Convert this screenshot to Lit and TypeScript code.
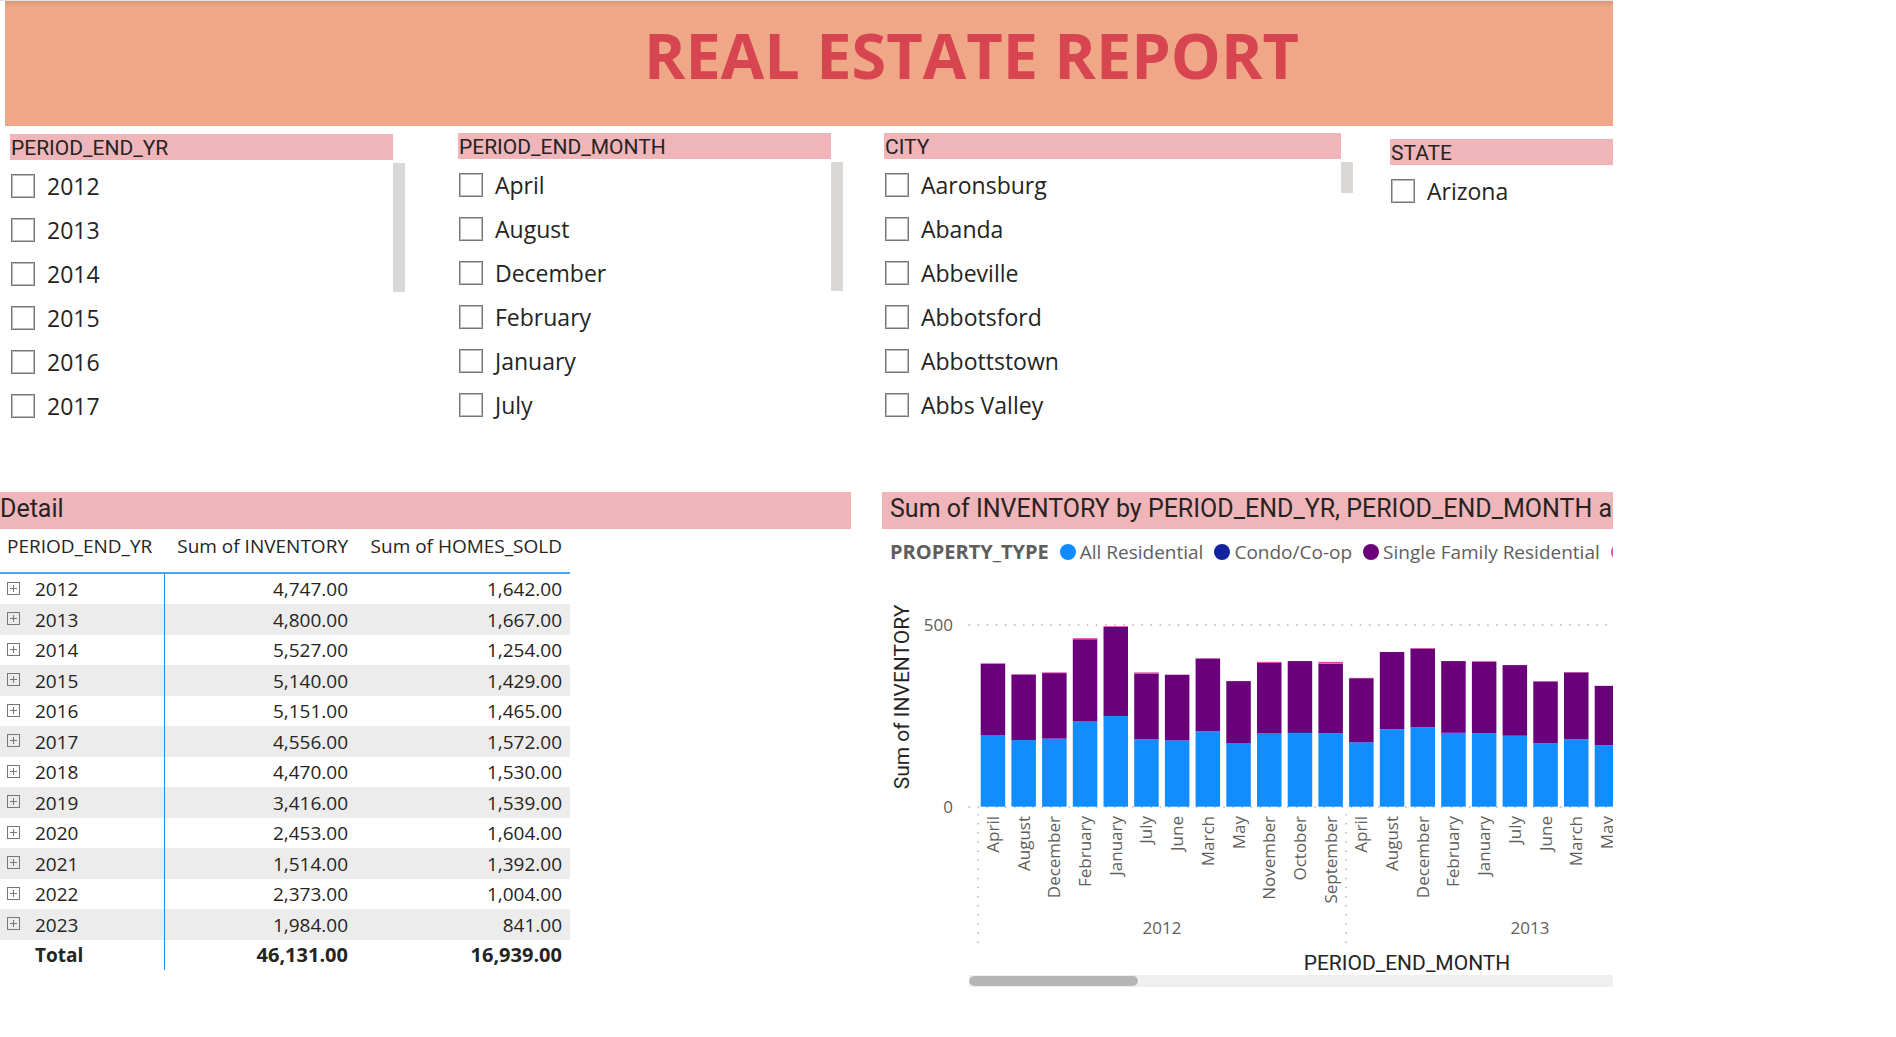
import { LitElement, html, svg, css } from "lit";
import { customElement, property } from "lit/decorators.js";

interface Bar {
  month: string;
  all: number;
  condo: number;
  single: number;
  town: number;
}

const YEARS = ["2012", "2013", "2014", "2015", "2016", "2017"];
const MONTHS = ["April", "August", "December", "February", "January", "July"];
const CITIES = ["Aaronsburg", "Abanda", "Abbeville", "Abbotsford", "Abbottstown", "Abbs Valley"];

const DETAIL: [string, string, string][] = [
  ["2012", "4,747.00", "1,642.00"],
  ["2013", "4,800.00", "1,667.00"],
  ["2014", "5,527.00", "1,254.00"],
  ["2015", "5,140.00", "1,429.00"],
  ["2016", "5,151.00", "1,465.00"],
  ["2017", "4,556.00", "1,572.00"],
  ["2018", "4,470.00", "1,530.00"],
  ["2019", "3,416.00", "1,539.00"],
  ["2020", "2,453.00", "1,604.00"],
  ["2021", "1,514.00", "1,392.00"],
  ["2022", "2,373.00", "1,004.00"],
  ["2023", "1,984.00", "841.00"],
];

const bar = (month: string, total: number, all: number, town = 0, condo = 0): Bar => ({
  month,
  all,
  condo,
  town,
  single: total - all - town - condo,
});

const BARS: Bar[] = [
  bar("April", 394, 197, 1),
  bar("August", 364, 183, 1),
  bar("December", 369, 187, 2),
  bar("February", 463, 234, 3),
  bar("January", 496, 249, 2),
  bar("July", 369, 185, 3),
  bar("June", 363, 182, 1),
  bar("March", 408, 207, 1),
  bar("May", 345, 175),
  bar("November", 398, 201, 3),
  bar("October", 400, 202, 0, 3),
  bar("September", 398, 202, 5),
  bar("April", 354, 177, 1),
  bar("August", 425, 213),
  bar("December", 436, 218, 2),
  bar("February", 400, 203),
  bar("January", 400, 202, 2),
  bar("July", 389, 195),
  bar("June", 345, 174, 1),
  bar("March", 370, 185, 1),
  bar("May", 332, 169),
];

const SERIES: { key: "all" | "condo" | "single" | "town"; color: string }[] = [
  { key: "all", color: "#118dff" },
  { key: "condo", color: "#12239e" },
  { key: "single", color: "#6b007b" },
  { key: "town", color: "#e044a7" },
];

@customElement("filter-list")
export class FilterList extends LitElement {
  @property() heading = "";
  @property({ attribute: false }) items: string[] = [];
  @property({ type: Number }) thumb = 0;

  static styles = css`
    :host {
      display: block;
    }
    .filter {
      margin: 0;
      padding: 0;
      border: 0;
      min-width: 0;
    }
    .heading {
      box-sizing: border-box;
      width: 100%;
      height: 26px;
      padding: 0 1px;
      background: #efb5b9;
      color: #252423;
      font: 21px/28px Roboto, "Liberation Sans", sans-serif;
    }
    .body {
      display: flex;
      justify-content: space-between;
      margin-right: -12px;
      padding-top: 3px;
    }
    .items {
      display: flex;
      flex-direction: column;
      margin: 0;
      padding: 1px 0 0 1px;
      list-style: none;
    }
    .item {
      display: flex;
      align-items: center;
      gap: 12px;
      height: 44px;
      color: #252423;
      font: 23px/44px "Open Sans", "Noto Sans", sans-serif;
    }
    .box {
      appearance: none;
      box-sizing: border-box;
      width: 24px;
      height: 24px;
      margin: 0;
      border: 1px solid #777;
      background: #fff;
      box-shadow: inset 0 0 0 1px #bbb;
    }
    .thumb {
      width: 12px;
      background: #d9d8d7;
    }
  `;

  render() {
    return html`
      <fieldset class="filter" aria-label=${this.heading}>
        <div class="heading">${this.heading}</div>
        <div class="body">
          <ul class="items">
            ${this.items.map(
              (item) => html`<li>
                <label class="item"><input class="box" type="checkbox" />${item}</label>
              </li>`
            )}
          </ul>
          ${this.thumb ? html`<div class="thumb" style="height:${this.thumb}px"></div>` : ""}
        </div>
      </fieldset>
    `;
  }
}

@customElement("detail-table")
export class DetailTable extends LitElement {
  static styles = css`
    :host {
      display: block;
    }
    .table {
      width: 570px;
      border-collapse: separate;
      border-spacing: 0;
      table-layout: fixed;
      color: #252423;
      font: 19px/30px "Open Sans", "Noto Sans", sans-serif;
    }
    .year-col {
      width: 165px;
    }
    .inv-col {
      width: 191px;
    }
    th,
    td {
      padding: 0 8px;
      text-align: right;
      white-space: nowrap;
      font-weight: 400;
    }
    thead th {
      height: 45px;
      box-sizing: border-box;
      border-bottom: 2px solid #4aa3f7;
      vertical-align: top;
      line-height: 34px;
    }
    .row > * {
      height: 30px;
    }
    .row:nth-child(even) > * {
      height: 31px;
      background: #ececec;
    }
    .first {
      padding: 0 0 0 7px;
      text-align: left;
    }
    tbody .first,
    tfoot .first {
      border-right: 1px solid #118dff;
    }
    tfoot .first {
      padding-left: 35px;
    }
    tfoot th,
    tfoot td {
      font-weight: 700;
    }
    tfoot td {
      font-size: 20px;
    }
    .year {
      display: flex;
      align-items: center;
      gap: 15px;
    }
    .expand {
      display: flex;
      padding: 0 0 2px;
      border: 0;
      background: none;
    }
  `;

  render() {
    return html`
      <table class="table">
        <colgroup>
          <col class="year-col" />
          <col class="inv-col" />
          <col />
        </colgroup>
        <thead>
          <tr>
            <th class="first" scope="col">PERIOD_END_YR</th>
            <th scope="col">Sum of INVENTORY</th>
            <th scope="col">Sum of HOMES_SOLD</th>
          </tr>
        </thead>
        <tbody>
          ${DETAIL.map(
            ([year, inventory, sold]) => html`<tr class="row">
              <th class="first" scope="row">
                <div class="year">
                  <button class="expand" aria-label="Expand ${year}">
                    <svg width="13" height="13" viewBox="0 0 13 13" fill="none" stroke="#777">
                      <rect x="0.5" y="0.5" width="12" height="12" />
                      <path d="M3 6.5h7M6.5 3v7" />
                    </svg>
                  </button>
                  ${year}
                </div>
              </th>
              <td>${inventory}</td>
              <td>${sold}</td>
            </tr>`
          )}
        </tbody>
        <tfoot>
          <tr>
            <th class="first" scope="row">Total</th>
            <td>46,131.00</td>
            <td>16,939.00</td>
          </tr>
        </tfoot>
      </table>
    `;
  }
}

@customElement("inventory-chart")
export class InventoryChart extends LitElement {
  static styles = css`
    :host {
      display: block;
      overflow: hidden;
    }
    .legend {
      display: flex;
      align-items: center;
      height: 46px;
      padding-left: 8px;
      color: #605e5c;
      font: 19px/48px "Open Sans", "Noto Sans", sans-serif;
      white-space: nowrap;
    }
    .legend-title {
      margin-right: 11px;
      font-weight: 700;
      font-size: 20px;
    }
    .dot {
      flex: none;
      width: 16px;
      height: 16px;
      margin: 0 4px 1px 0;
      border-radius: 50%;
    }
    .name {
      margin-right: 11px;
    }
    .all {
      background: #118dff;
    }
    .condo {
      background: #12239e;
    }
    .single {
      background: #6b007b;
    }
    .town {
      background: #e044a7;
    }
    .plot {
      display: block;
      width: 100%;
      height: 400px;
      overflow: hidden;
    }
    .tick {
      fill: #605e5c;
      font: 17px "Open Sans", "Noto Sans", sans-serif;
    }
    .axis {
      fill: #252423;
      font: 21px Roboto, "Liberation Sans", sans-serif;
    }
    .grid {
      stroke: #c8c6c4;
      stroke-width: 2;
      stroke-dasharray: 1.5 7.6;
    }
    .track {
      height: 12px;
      margin-left: 87px;
      background: #efefef;
    }
    .thumb {
      width: 169px;
      height: 10px;
      border: 1px solid #efefef;
      border-left: 0;
      border-right-color: #fff;
      border-radius: 6px;
      background: #b5b5b5;
      box-sizing: content-box;
    }
  `;

  private renderBar(b: Bar, index: number) {
    const scale = 182 / 500;
    const x = 98.7 + index * 30.7;
    let y = 231.7;
    const center = x + 12.2;
    return svg`<g>
      ${SERIES.filter((s) => b[s.key] > 0).map((s) => {
        const h = b[s.key] * scale;
        y -= h;
        return svg`<rect x=${x} y=${y} width="24.5" height=${h} fill=${s.color}></rect>`;
      })}
      <text class="tick" text-anchor="end" transform="translate(${center + 6} 241) rotate(-90)">${b.month}</text>
    </g>`;
  }

  render() {
    return html`
      <div class="legend">
        <span class="legend-title">PROPERTY_TYPE</span>
        <span class="dot all"></span><span class="name">All Residential</span>
        <span class="dot condo"></span><span class="name">Condo/Co-op</span>
        <span class="dot single"></span><span class="name">Single Family Residential</span>
        <span class="dot town"></span>
      </div>
      <svg class="plot">
        <line class="grid" x1="86.5" y1="50" x2="2000" y2="50" />
        <line class="grid" x1="86.5" y1="232" x2="2000" y2="232" />
        <line class="grid" x1="96" y1="239" x2="96" y2="370" />
        <line class="grid" x1="464" y1="239" x2="464" y2="370" />
        <text class="tick" text-anchor="end" x="71" y="56">500</text>
        <text class="tick" text-anchor="end" x="71" y="238">0</text>
        ${BARS.map((b, i) => this.renderBar(b, i))}
        <text class="tick" text-anchor="middle" x="280" y="359">2012</text>
        <text class="tick" text-anchor="middle" x="648" y="359">2013</text>
        <text class="axis" text-anchor="middle" x="525" y="395">PERIOD_END_MONTH</text>
        <text class="axis" text-anchor="middle" transform="translate(27 122) rotate(-90)">Sum of INVENTORY</text>
      </svg>
      <div class="track"><div class="thumb"></div></div>
    `;
  }
}

@customElement("app-root")
export class AppRoot extends LitElement {
  static styles = css`
    :host {
      display: block;
      min-height: 100vh;
      background: #fff;
    }
    .report {
      margin-right: 283px;
      overflow: hidden;
      padding-top: 1px;
      box-shadow: inset 0 1px 0 #e0e0e0;
    }
    .banner {
      box-sizing: border-box;
      width: calc(100% + 325px);
      height: 125px;
      padding-left: 5px;
    }
    .title {
      height: 125px;
      margin: 0;
      background: linear-gradient(#d8977a, #f0a787 6px);
      color: #d64550;
      text-align: center;
      font: 700 63px/107px "Open Sans", "Noto Sans", sans-serif;
    }
    .filters {
      display: grid;
      grid-template-columns: 448fr 426fr 506fr 223fr;
      padding: 7px 0 0 10px;
      height: 359px;
      box-sizing: border-box;
    }
    .years {
      margin: 1px 65px 0 0;
    }
    .months {
      margin-right: 53px;
    }
    .cities {
      margin-right: 49px;
    }
    .states {
      margin-top: 6px;
    }
    .panels {
      display: grid;
      grid-template-columns: 882fr 731fr;
      padding-top: 7px;
    }
    .panel {
      min-width: 0;
    }
    .detail {
      padding-right: 31px;
    }
    .panel-title {
      height: 37px;
      margin: 0;
      overflow: hidden;
      background: #efb5b9;
      color: #252423;
      font: 25px/34px Roboto, "Liberation Sans", sans-serif;
      white-space: nowrap;
    }
    .chart .panel-title {
      padding-left: 8px;
    }
  `;

  render() {
    return html`
      <main class="report">
        <header class="banner"><h1 class="title">REAL ESTATE REPORT</h1></header>
        <section class="filters">
          <filter-list class="years" heading="PERIOD_END_YR" .items=${YEARS} .thumb=${129}></filter-list>
          <filter-list class="months" heading="PERIOD_END_MONTH" .items=${MONTHS} .thumb=${129}></filter-list>
          <filter-list class="cities" heading="CITY" .items=${CITIES} .thumb=${31}></filter-list>
          <filter-list class="states" heading="STATE" .items=${["Arizona"]}></filter-list>
        </section>
        <div class="panels">
          <section class="panel detail">
            <h2 class="panel-title">Detail</h2>
            <detail-table></detail-table>
          </section>
          <section class="panel chart">
            <h2 class="panel-title">Sum of INVENTORY by PERIOD_END_YR, PERIOD_END_MONTH a</h2>
            <inventory-chart></inventory-chart>
          </section>
        </div>
      </main>
    `;
  }
}
